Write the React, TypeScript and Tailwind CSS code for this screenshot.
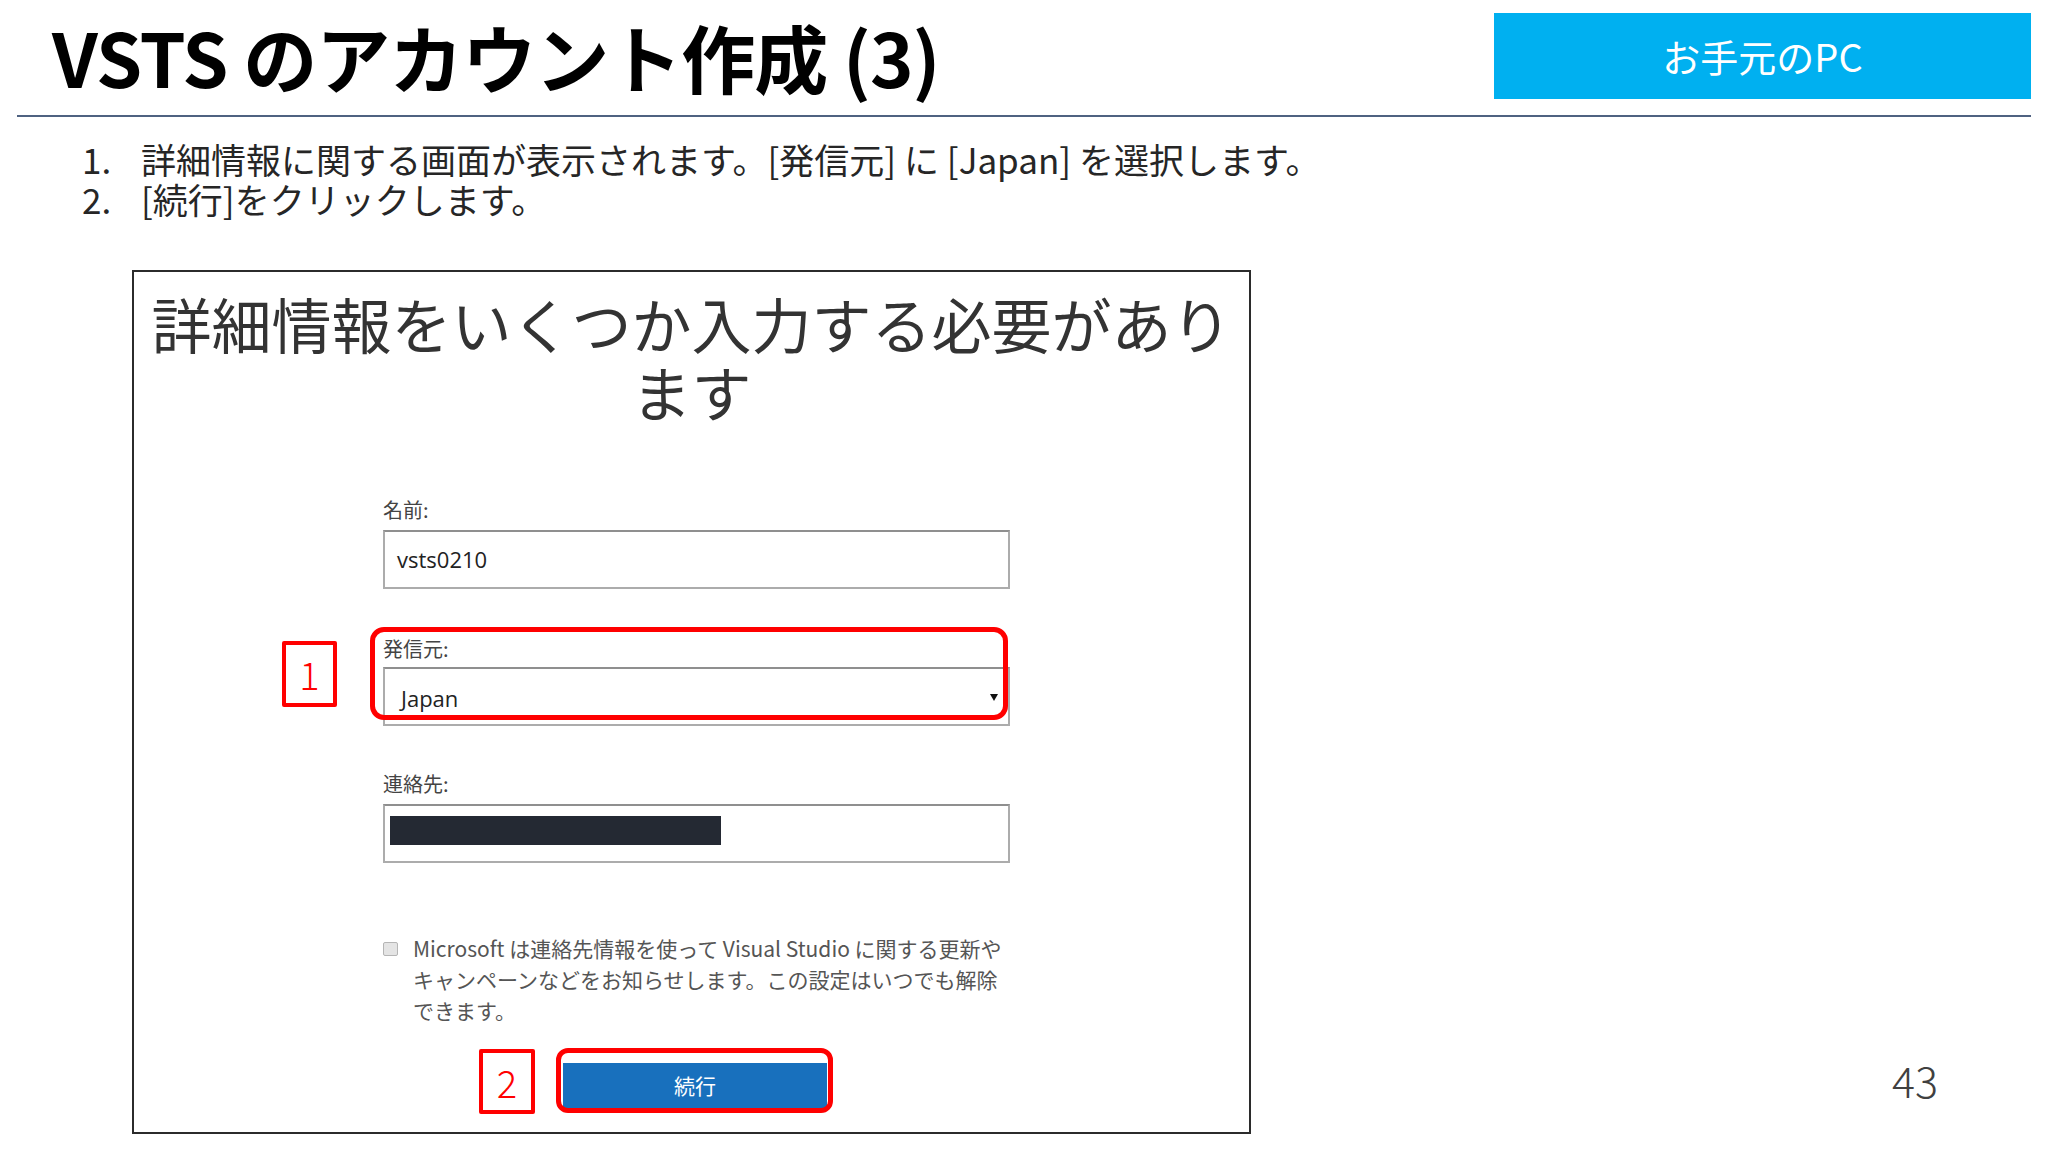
const jp = { fontFamily: "'Noto Sans CJK JP', 'Noto Sans', sans-serif" };
const web = { fontFamily: "'Open Sans', 'Noto Sans CJK JP', sans-serif" };

function RedBadge({ n, className }: { n: string; className: string }) {
  return (
    <div
      className={`absolute flex items-center justify-center border-[4px] border-[#ff0000] rounded-[2px] bg-white text-[#ff0000] text-[38px] font-light leading-none ${className}`}
      style={jp}
    >
      {n}
    </div>
  );
}

function Field({ label, children }: { label: string; children: React.ReactNode }) {
  return (
    <div>
      <div className="text-[20px] leading-[24px] text-[#444]" style={jp}>
        {label}
      </div>
      {children}
    </div>
  );
}

export default function App() {
  return (
    <div className="w-[2048px] h-[1152px] bg-white overflow-hidden text-[#262626]" style={jp}>
      {/* Header */}
      <div className="flex justify-between items-start h-[115px]">
        <h1 className="ml-[52px] mt-[19px] text-[74px] leading-none font-bold text-black tracking-[-1px] whitespace-nowrap">
          VSTS のアカウント作成 (3)
        </h1>
        <div className="mt-[13px] mr-[17px] w-[537px] h-[86px] bg-[#00b0f0] flex items-center justify-center text-white text-[38px] leading-none">
          お手元のPC
        </div>
      </div>
      <div className="mx-[17px] border-t-2 border-[#4f6281]" />

      {/* Steps */}
      <div className="mt-[22px] text-[35px] leading-[40px] text-[#262626]">
        <div className="flex">
          <span className="w-[59px] pl-[82px] box-content shrink-0">1.</span>
          <span className="whitespace-nowrap">詳細情報に関する画面が表示されます。[発信元] に [Japan] を選択します。</span>
        </div>
        <div className="flex">
          <span className="w-[59px] pl-[82px] box-content shrink-0">2.</span>
          <span className="whitespace-nowrap">[続行]をクリックします。</span>
        </div>
      </div>

      {/* Body */}
      <div className="flex items-end mt-[51px]">
        <div className="ml-[132px] w-[1119px] h-[864px] border-2 border-[#2b2b2b] bg-white">
          <div className="pt-[17px] text-center text-[60px] leading-[68px] text-[#333]">
            <div>詳細情報をいくつか入力する必要があり</div>
            <div>ます</div>
          </div>

          <div className="ml-[249px] w-[627px] mt-[73px]">
            <Field label="名前:">
              <div className="mt-[8px] h-[59px] border-2 border-[#acacac] border-t-[#8f8f8f] flex items-center pl-[12px] text-[22px] text-[#222]" style={web}>
                vsts0210
              </div>
            </Field>

            <div className="relative mt-[48px]">
              <Field label="発信元:">
                <div className="mt-[6px] h-[59px] border-2 border-[#acacac] border-t-[#8f8f8f] flex items-center justify-between pl-[16px] pr-[10px] text-[22px] text-[#222]" style={web}>
                  <span className="pt-[4px]">Japan</span>
                  <svg width="8" height="8" viewBox="0 0 8 8">
                    <polygon points="0,1 8,1 4,8" fill="#111" />
                  </svg>
                </div>
              </Field>
              <div className="absolute left-[-13px] top-[-10px] w-[638px] h-[93px] border-[5px] border-[#ff0000] rounded-[14px]" />
              <RedBadge n="1" className="left-[-101px] top-[4px] w-[55px] h-[66px]" />
            </div>

            <div className="mt-[46px]">
              <Field label="連絡先:">
                <div className="mt-[8px] h-[59px] border-2 border-[#acacac] border-t-[#8f8f8f] pl-[5px] pt-[10px]">
                  <div className="w-[331px] h-[29px] bg-[#242933]" />
                </div>
              </Field>
            </div>

            <div className="mt-[70px] flex">
              <div className="mt-[9px] w-[15px] h-[14px] rounded-[2px] border border-[#b5b5b5] bg-[#e4e4e4] shrink-0" />
              <div className="ml-[15px] text-[21px] leading-[31px] text-[#555] whitespace-nowrap">
                <div>Microsoft は連絡先情報を使って Visual Studio に関する更新や</div>
                <div>キャンペーンなどをお知らせします。この設定はいつでも解除</div>
                <div>できます。</div>
              </div>
            </div>

            <div className="relative mt-[37px] ml-[180px] w-[264px]">
              <div className="h-[45px] bg-[#1870bd] flex items-center justify-center text-white text-[21px]">
                続行
              </div>
              <div className="absolute left-[-7px] top-[-15px] w-[277px] h-[65px] border-[5px] border-[#ff0000] rounded-[12px]" />
              <RedBadge n="2" className="left-[-84px] top-[-14px] w-[56px] h-[65px]" />
            </div>
          </div>
        </div>

        <div className="flex-1 flex justify-end pr-[110px] mb-[33px]">
          <span className="text-[43px] leading-none font-light text-[#404040]">43</span>
        </div>
      </div>
    </div>
  );
}
